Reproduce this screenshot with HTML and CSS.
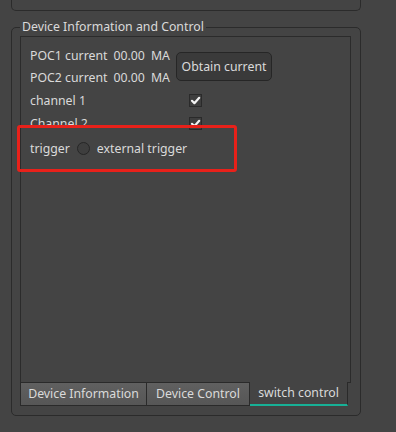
FILE: index.html
```html
<!DOCTYPE html>
<html>
<head>
<meta charset="utf-8">
<link rel="stylesheet" href="styles.css">
</head>
<body>
<div class="top-box"></div>
<fieldset class="group">
  <legend class="group-title">Device Information and Control</legend>
  <div class="pane">
    <div class="grid">
      <div class="cell label-row"><span>POC1 current</span><span>00.00</span><span>MA</span></div>
      <button class="btn">Obtain current</button>
      <div class="cell label-row"><span>POC2 current</span><span>00.00</span><span>MA</span></div>
      <div class="cell">channel 1</div>
      <div class="cell check-cell"><span class="check"><svg width="13" height="13" viewBox="0 0 13 13"><path d="M3 6.8 L5.4 9.2 L10.2 3.8" fill="none" stroke="#f2f2f2" stroke-width="2.2" stroke-linecap="round" stroke-linejoin="round"/></svg></span></div>
      <div class="cell">Channel 2</div>
      <div class="cell check-cell"><span class="check"><svg width="13" height="13" viewBox="0 0 13 13"><path d="M3 6.8 L5.4 9.2 L10.2 3.8" fill="none" stroke="#f2f2f2" stroke-width="2.2" stroke-linecap="round" stroke-linejoin="round"/></svg></span></div>
    </div>
    <div class="trigger-row">
      <span>trigger</span>
      <span class="radio"></span>
      <span>external trigger</span>
    </div>
  </div>
  <div class="tabbar">
    <div class="tab">Device Information</div>
    <div class="tab">Device Control</div>
    <div class="tab tab-active">switch control</div>
    <div class="tab-fill"></div>
  </div>
</fieldset>
<div class="highlight"></div>
</body>
</html>
```

FILE: styles.css
```css
html, body {
  margin: 0;
  padding: 0;
}
body {
  width: 396px;
  height: 432px;
  overflow: hidden;
  background: #444444;
  color: #dadada;
  font-family: "Noto Sans", "Open Sans", sans-serif;
  font-size: 12.3px;
  position: relative;
}
.top-box {
  margin-left: 11px;
  width: 350px;
  height: 11px;
  box-sizing: border-box;
  border: 1px solid #2b2b2b;
  border-top: none;
  border-radius: 0 0 5px 5px;
}
.group {
  margin: 7px 0 0 11px;
  width: 350px;
  box-sizing: border-box;
  border: 1px solid #2b2b2b;
  border-radius: 5px;
  padding: 0 9px 9px 8px;
  min-width: 0;
}
.group-title {
  padding: 0 2px;
  line-height: 18px;
  height: 18px;
  color: #dadada;
}
.pane {
  height: 346px;
  box-sizing: border-box;
  border: 1px solid #2b2b2b;
  border-bottom: none;
  padding: 7px 0 0 9px;
}
.grid {
  display: grid;
  grid-template-columns: 146px auto;
  grid-template-rows: 22px 22px 24px 22px;
  justify-items: start;
}
.cell {
  display: flex;
  align-items: center;
  white-space: nowrap;
}
.label-row {
  gap: 6px;
}
.btn {
  grid-column: 2;
  grid-row: 1 / span 2;
  align-self: center;
  width: 96px;
  height: 29px;
  margin: 0;
  padding: 0;
  background: #3a3a3a;
  border: 1px solid #262626;
  border-radius: 5px;
  color: #dadada;
  font-family: inherit;
  font-size: inherit;
}
.check-cell {
  padding-left: 13px;
}
.check {
  display: block;
  width: 13px;
  height: 13px;
  box-sizing: border-box;
  border: 1px solid #2a2a2a;
  background: #3e3e3e;
  position: relative;
}
.check svg {
  position: absolute;
  left: -1px;
  top: -1px;
}
.trigger-row {
  display: flex;
  align-items: center;
  height: 24px;
  margin-top: 2px;
}
.radio {
  width: 13px;
  height: 13px;
  box-sizing: border-box;
  border: 1.5px solid #262626;
  border-radius: 50%;
  background: #3e3e3e;
  margin: 0 7px;
}
.tabbar {
  display: flex;
  height: 24px;
}
.tab {
  box-sizing: border-box;
  height: 24px;
  line-height: 22px;
  text-align: center;
  border: 1px solid #2a2a2a;
  background: linear-gradient(#606060, #565656);
  white-space: nowrap;
}
.tab:nth-child(1) {
  width: 127px;
}
.tab:nth-child(2) {
  width: 103px;
  border-left: none;
}
.tab-active {
  width: 98px;
  border: none;
  border-right: 1px solid #2a2a2a;
  border-bottom: 2px solid #17b096;
  background: none;
  line-height: 21px;
}
.tab-fill {
  flex: 1;
  height: 1px;
  box-sizing: border-box;
  border-top: 1px solid #2a2a2a;
  border-right: 1px solid #2a2a2a;
}
.highlight {
  position: absolute;
  left: 17px;
  top: 125px;
  width: 220px;
  height: 47px;
  box-sizing: border-box;
  border: 3px solid #e8211a;
  border-radius: 3px;
}
```
